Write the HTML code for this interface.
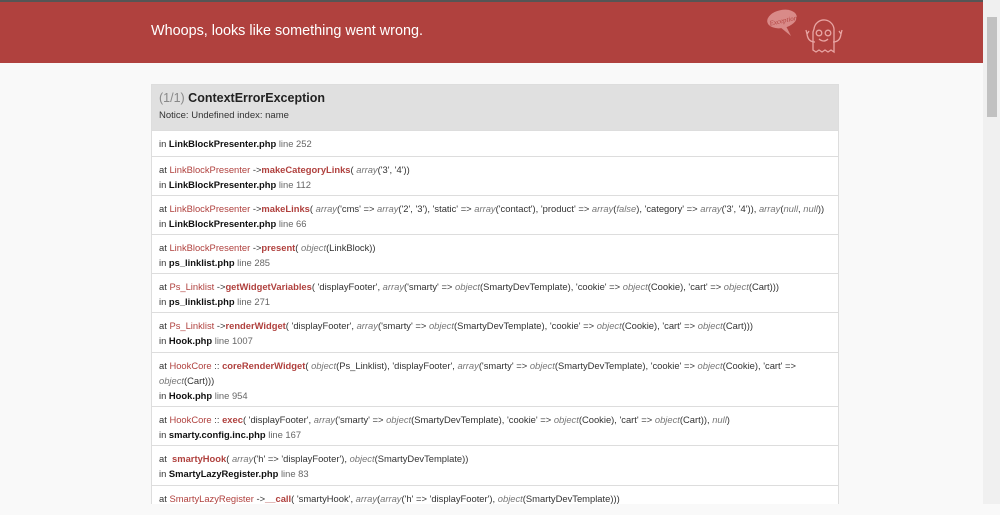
<!DOCTYPE html>
<html><head><style>
*{margin:0;padding:0;box-sizing:border-box}
body{width:1000px;height:504px;overflow:hidden;background:#f9f9f9;font-family:"Liberation Sans",sans-serif;position:relative}
.top{position:absolute;left:0;top:0;width:983px;height:2px;background:#555}
.hdr{position:absolute;left:0;top:2px;width:983px;height:61px;background:#b0413e}
.hdr h1{position:absolute;left:151px;top:21px;color:#fff;font-size:14.4px;font-weight:normal}
.sb{position:absolute;left:983px;top:0;width:17px;height:504px;background:#f0f0f0}
.sb div{position:absolute;left:4px;top:17px;width:10px;height:100px;background:#c1c1c1}
.box{position:absolute;left:151px;top:84px;width:688px;height:420px;background:#fff;border:1px solid #ddd;border-bottom:none}
.head{position:absolute;left:0;top:0;width:686px;height:45px;background:#e0e0e0;padding:5px 7px}
.head .t{font-size:12.5px;font-weight:bold;color:#222;line-height:16px}
.head .t span{color:#888;font-weight:normal}
.head .n{font-size:9.5px;color:#333;margin-top:4px}
.r{position:absolute;left:0;width:686px;border-top:1px solid #ddd;padding:5px 7px;font-size:9.4px;line-height:15px;color:#333;white-space:nowrap}
.r b{color:#111}
.c{color:#b0413e}
.m{color:#b0413e;font-weight:bold}
i{color:#777}
.g{color:#666}
</style></head><body>
<div class="top"></div>
<div class="hdr"><h1>Whoops, looks like something went wrong.</h1>
<svg style="position:absolute;left:764px;top:6px" width="80" height="50" viewBox="0 0 80 50" fill="none" stroke="#e8a5a3" stroke-width="1.3">
<ellipse cx="18" cy="11" rx="15" ry="9" transform="rotate(-12 18 11)" fill="#d98a88" stroke="none"/>
<path d="M22 18 L27 28 L16 19" fill="#d98a88" stroke="none"/>
<text x="5" y="15" font-size="7" fill="#b0413e" stroke="none" font-style="italic" font-family="Liberation Serif,serif" transform="rotate(-12 18 11)">Exception!</text>
<path d="M50 21 a10 10 0 0 1 20 2 V44 l-3-2 -3 2 -3-2 -3 2 -3-2 -3 2 -3-2 V24z"/>
<circle cx="55" cy="25" r="2.8"/><circle cx="64" cy="25" r="2.8"/>
<path d="M55 31 q5 4 9 0"/>
<path d="M51 34 q-7 0 -8-8 M43 26 l-1-4 M43 26 l2-3 M69 34 q7 0 8-8 M77 26 l1-4 M77 26 l-2-3"/>
</svg></div>
<div class="sb"><div></div></div>
<div class="box">
<div class="head"><div class="t"><span>(1/1)</span> ContextErrorException</div><div class="n">Notice: Undefined index: name</div></div>
<div class="r" style="top:45px;height:26px">in <b>LinkBlockPresenter.php</b> <span class="g">line 252</span></div>
<div class="r" style="top:71px;height:39px">at <span class="c">LinkBlockPresenter</span> -&gt;<span class="m">makeCategoryLinks</span>( <i>array</i>('3', '4'))<br>in <b>LinkBlockPresenter.php</b> <span class="g">line 112</span></div>
<div class="r" style="top:110px;height:39px">at <span class="c">LinkBlockPresenter</span> -&gt;<span class="m">makeLinks</span>( <i>array</i>('cms' =&gt; <i>array</i>('2', '3'), 'static' =&gt; <i>array</i>('contact'), 'product' =&gt; <i>array</i>(<i>false</i>), 'category' =&gt; <i>array</i>('3', '4')), <i>array</i>(<i>null</i>, <i>null</i>))<br>in <b>LinkBlockPresenter.php</b> <span class="g">line 66</span></div>
<div class="r" style="top:149px;height:39px">at <span class="c">LinkBlockPresenter</span> -&gt;<span class="m">present</span>( <i>object</i>(LinkBlock))<br>in <b>ps_linklist.php</b> <span class="g">line 285</span></div>
<div class="r" style="top:188px;height:39px">at <span class="c">Ps_Linklist</span> -&gt;<span class="m">getWidgetVariables</span>( 'displayFooter', <i>array</i>('smarty' =&gt; <i>object</i>(SmartyDevTemplate), 'cookie' =&gt; <i>object</i>(Cookie), 'cart' =&gt; <i>object</i>(Cart)))<br>in <b>ps_linklist.php</b> <span class="g">line 271</span></div>
<div class="r" style="top:227px;height:40px">at <span class="c">Ps_Linklist</span> -&gt;<span class="m">renderWidget</span>( 'displayFooter', <i>array</i>('smarty' =&gt; <i>object</i>(SmartyDevTemplate), 'cookie' =&gt; <i>object</i>(Cookie), 'cart' =&gt; <i>object</i>(Cart)))<br>in <b>Hook.php</b> <span class="g">line 1007</span></div>
<div class="r" style="top:267px;height:54px">at <span class="c">HookCore</span> :: <span class="m">coreRenderWidget</span>( <i>object</i>(Ps_Linklist), 'displayFooter', <i>array</i>('smarty' =&gt; <i>object</i>(SmartyDevTemplate), 'cookie' =&gt; <i>object</i>(Cookie), 'cart' =&gt;<br><i>object</i>(Cart)))<br>in <b>Hook.php</b> <span class="g">line 954</span></div>
<div class="r" style="top:321px;height:39px">at <span class="c">HookCore</span> :: <span class="m">exec</span>( 'displayFooter', <i>array</i>('smarty' =&gt; <i>object</i>(SmartyDevTemplate), 'cookie' =&gt; <i>object</i>(Cookie), 'cart' =&gt; <i>object</i>(Cart)), <i>null</i>)<br>in <b>smarty.config.inc.php</b> <span class="g">line 167</span></div>
<div class="r" style="top:360px;height:40px">at &nbsp;<span class="m">smartyHook</span>( <i>array</i>('h' =&gt; 'displayFooter'), <i>object</i>(SmartyDevTemplate))<br>in <b>SmartyLazyRegister.php</b> <span class="g">line 83</span></div>
<div class="r" style="top:400px;height:30px">at <span class="c">SmartyLazyRegister</span> -&gt;<span class="m">__call</span>( 'smartyHook', <i>array</i>(<i>array</i>('h' =&gt; 'displayFooter'), <i>object</i>(SmartyDevTemplate)))</div>
</div>
</body></html>
